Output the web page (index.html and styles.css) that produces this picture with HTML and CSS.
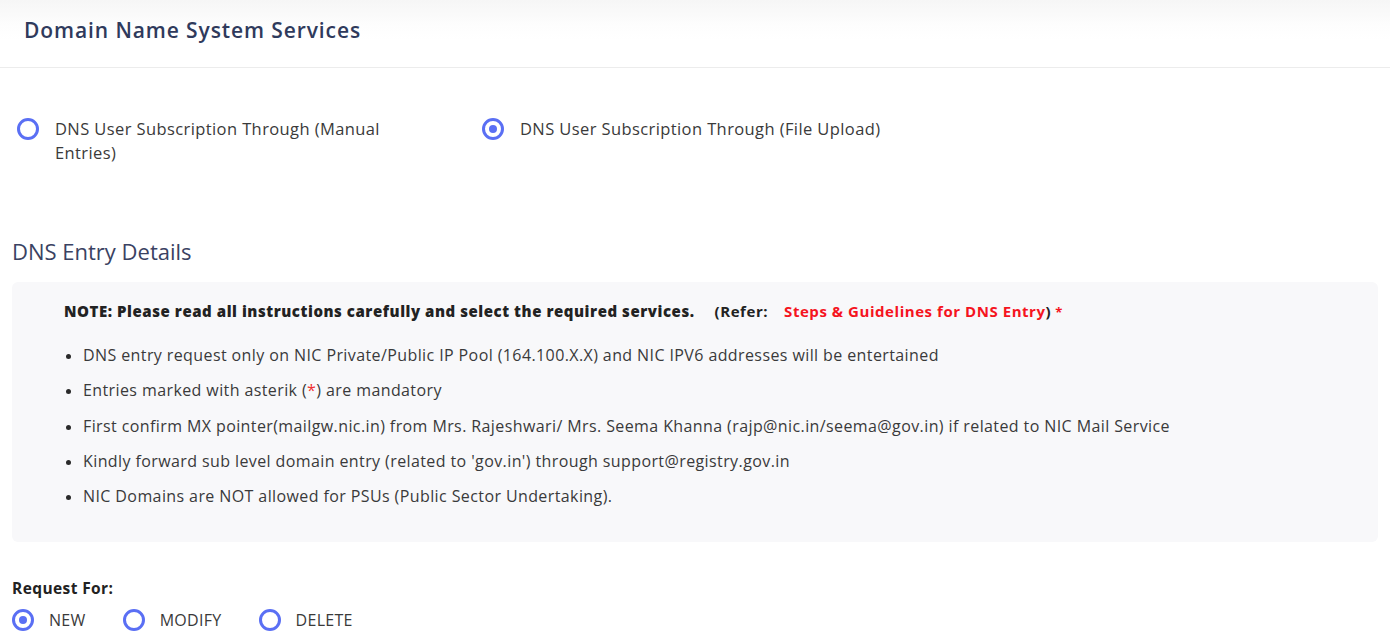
FILE: index.html
```html
<!DOCTYPE html>
<html lang="en">
<head>
<meta charset="utf-8">
<title>Domain Name System Services</title>
<link rel="stylesheet" href="styles.css">
</head>
<body>
<header class="page-header">
  <h1 class="page-title">Domain Name System Services</h1>
</header>
<main class="content">
  <div class="sub-options">
    <label class="option">
      <span class="radio"></span>
      <span class="option-text narrow">DNS User Subscription Through (Manual Entries)</span>
    </label>
    <label class="option">
      <span class="radio checked"></span>
      <span class="option-text">DNS User Subscription Through (File Upload)</span>
    </label>
  </div>

  <h2 class="section-title">DNS Entry Details</h2>

  <div class="note-box">
    <p class="note"><strong class="note-main">NOTE: Please read all instructions carefully and select the required services.</strong><span class="refer">(Refer:<a class="refer-link" href="#">Steps &amp; Guidelines for DNS Entry</a>)</span><span class="req">*</span></p>
    <ul class="rules">
      <li>DNS entry request only on NIC Private/Public IP Pool (164.100.X.X) and NIC IPV6 addresses will be entertained</li>
      <li>Entries marked with asterik (<span class="req-light">*</span>) are mandatory</li>
      <li>First confirm MX pointer(mailgw.nic.in) from Mrs. Rajeshwari/ Mrs. Seema Khanna (rajp@nic.in/seema@gov.in) if related to NIC Mail Service</li>
      <li>Kindly forward sub level domain entry (related to 'gov.in') through support@registry.gov.in</li>
      <li>NIC Domains are NOT allowed for PSUs (Public Sector Undertaking).</li>
    </ul>
  </div>

  <div class="request">
    <p class="request-label">Request For:</p>
    <div class="request-options">
      <label class="req-option"><span class="radio checked"></span><span class="req-text">NEW</span></label>
      <label class="req-option"><span class="radio"></span><span class="req-text">MODIFY</span></label>
      <label class="req-option"><span class="radio"></span><span class="req-text">DELETE</span></label>
    </div>
  </div>
</main>
</body>
</html>
```
FILE: styles.css
```css
* { box-sizing: border-box; }
html, body { margin: 0; padding: 0; background: #ffffff; }
body {
  font-family: "Open Sans", "Noto Sans", sans-serif;
  color: #363636;
  width: 1390px;
  height: 641px;
  overflow: hidden;
}
.page-header {
  height: 68px;
  background: linear-gradient(#f6f6f6 0px, #fdfdfd 25px, #ffffff 40px);
  border-bottom: 1px solid #ececec;
  padding: 18px 0 0 24px;
}
.page-title {
  margin: 0;
  font-size: 21px;
  line-height: 24px;
  font-weight: 600;
  letter-spacing: 0.9px;
  color: #2f3a5c;
}
.content { padding: 0; }
.sub-options {
  display: flex;
  margin-top: 49px;
  padding-left: 17px;
}
.option {
  display: flex;
  align-items: flex-start;
  width: 465px;
  flex: none;
}
.option-text {
  font-size: 16.5px;
  line-height: 24px;
  letter-spacing: 0.4px;
  color: #3a3a3a;
  margin-left: 16px;
  white-space: nowrap;
}
.option-text.narrow {
  max-width: 345px;
  white-space: normal;
}
.radio {
  flex: none;
  width: 22px;
  height: 22px;
  border: 3px solid #5a6ff4;
  border-radius: 50%;
  display: flex;
  align-items: center;
  justify-content: center;
  background: #fff;
}
.option .radio { margin-top: 1px; }
.radio.checked::after {
  content: "";
  width: 8px;
  height: 8px;
  border-radius: 50%;
  background: #5a6ff4;
}
.section-title {
  margin: 71px 0 0 12px;
  font-size: 22px;
  line-height: 30px;
  font-weight: 500;
  color: #3a4262;
}
.note-box {
  margin: 16px 12px 0 12px;
  height: 260px;
  background: #f8f8fa;
  border-radius: 6px;
  padding: 18px 0 0 52px;
}
.note {
  margin: 0;
  font-size: 15px;
  line-height: 22px;
  font-weight: 700;
  letter-spacing: 0.55px;
  color: #222;
  display: flex;
  align-items: baseline;
}
.refer { margin-left: 20px; }
.refer-link {
  color: #f5141e;
  text-decoration: none;
  margin-left: 16px;
}
.req { color: #f5141e; margin-left: 4px; font-size: 13px; }
.rules {
  list-style: none;
  margin: 15px 0 0 2px;
  padding: 0;
}
.rules li {
  display: flex;
  align-items: center;
  font-size: 16px;
  line-height: 35.25px;
  letter-spacing: 0.4px;
  color: #3a3a3a;
}
.rules li::before {
  content: "";
  flex: none;
  width: 5px;
  height: 5px;
  border-radius: 50%;
  background: #2a2a2a;
  margin: 2px 12px 0 0;
}
.req-light { color: #f03030; }
.request { margin: 35px 0 0 12px; }
.request-label {
  margin: 0;
  font-size: 15.5px;
  line-height: 22px;
  font-weight: 700;
  letter-spacing: 0.4px;
  color: #222;
}
.request-options {
  display: flex;
  align-items: center;
  margin-top: 10px;
  gap: 37px;
}
.req-option {
  display: flex;
  align-items: center;
  gap: 15px;
}
.req-text {
  font-size: 16px;
  line-height: 22px;
  letter-spacing: 0.3px;
  color: #3a3a3a;
}
```
